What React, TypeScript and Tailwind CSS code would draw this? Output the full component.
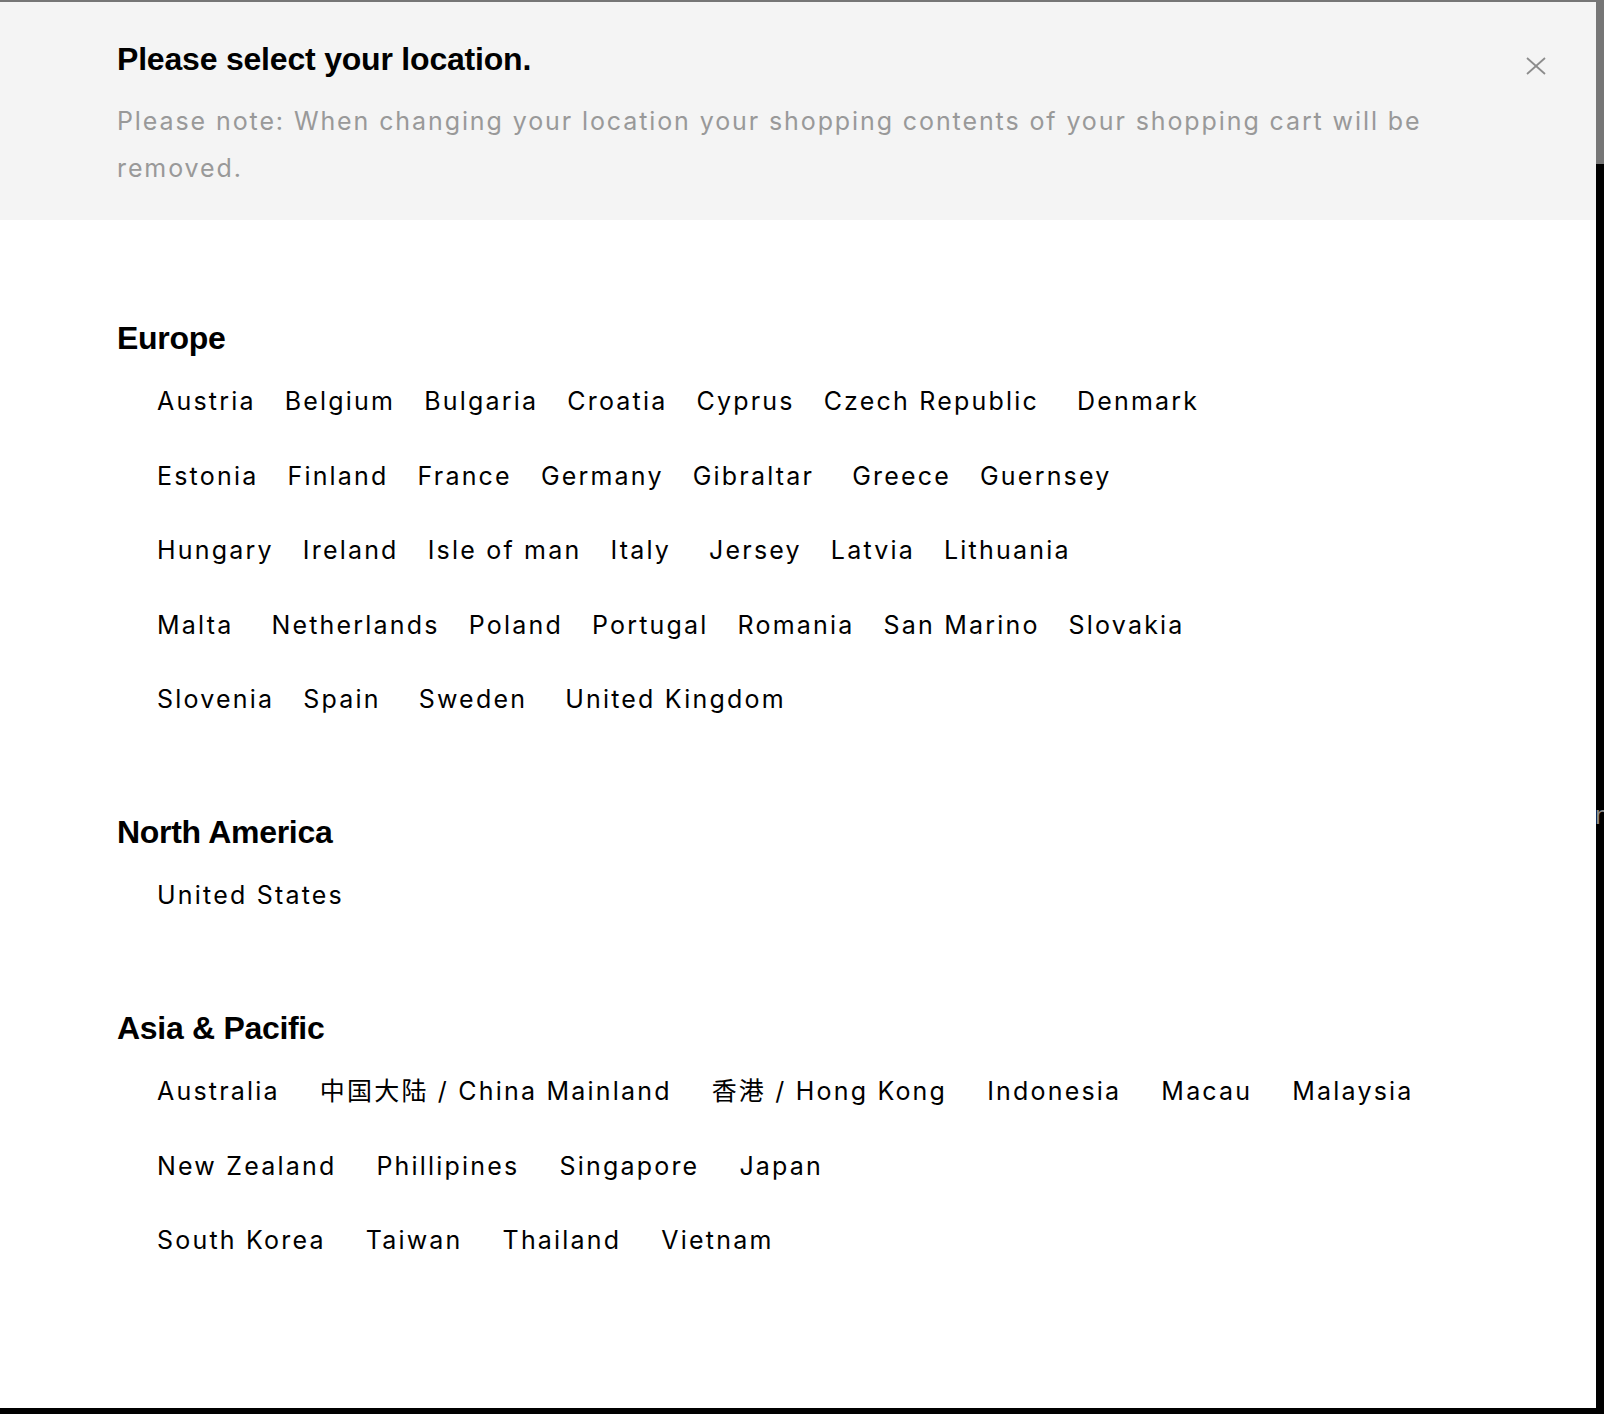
import React from "react";

type Item = { name: string; wide?: boolean; wider?: boolean };

const FONT = {
  fontFamily: '"Liberation Sans", "Noto Sans CJK SC", Arial, sans-serif',
};

const BODY = {
  fontFamily: 'Inter, "Noto Sans CJK SC", "Liberation Sans", sans-serif',
};

const europe: Item[][] = [
  [
    { name: "Austria" },
    { name: "Belgium" },
    { name: "Bulgaria" },
    { name: "Croatia" },
    { name: "Cyprus" },
    { name: "Czech Republic", wide: true },
    { name: "Denmark" },
  ],
  [
    { name: "Estonia" },
    { name: "Finland" },
    { name: "France" },
    { name: "Germany" },
    { name: "Gibraltar", wide: true },
    { name: "Greece" },
    { name: "Guernsey" },
  ],
  [
    { name: "Hungary" },
    { name: "Ireland" },
    { name: "Isle of man" },
    { name: "Italy", wide: true },
    { name: "Jersey" },
    { name: "Latvia" },
    { name: "Lithuania" },
  ],
  [
    { name: "Malta", wide: true },
    { name: "Netherlands" },
    { name: "Poland" },
    { name: "Portugal" },
    { name: "Romania" },
    { name: "San Marino" },
    { name: "Slovakia" },
  ],
  [
    { name: "Slovenia" },
    { name: "Spain", wide: true },
    { name: "Sweden", wide: true },
    { name: "United Kingdom" },
  ],
];

const northAmerica: Item[][] = [[{ name: "United States" }]];

const asia: Item[][] = [
  [
    { name: "Australia", wider: true },
    { name: "中国大陆 / China Mainland", wider: true },
    { name: "香港 / Hong Kong", wider: true },
    { name: "Indonesia", wider: true },
    { name: "Macau", wider: true },
    { name: "Malaysia", wider: true },
  ],
  [
    { name: "New Zealand", wider: true },
    { name: "Phillipines", wider: true },
    { name: "Singapore", wider: true },
    { name: "Japan", wider: true },
  ],
  [
    { name: "South Korea", wider: true },
    { name: "Taiwan", wider: true },
    { name: "Thailand", wider: true },
    { name: "Vietnam", wider: true },
  ],
];

function Region({ title, rows }: { title: string; rows: Item[][] }) {
  return (
    <section className="flex flex-col">
      <h3 className="text-[32px] leading-[40px] font-bold tracking-[-0.3px] text-black">
        {title}
      </h3>
      <div className="mt-[28px] flex flex-col gap-y-[44.5px] pl-[40px]" style={BODY}>
        {rows.map((row, i) => (
          <div key={i} className="flex flex-row gap-x-[29px]">
            {row.map((it) => (
              <button
                key={it.name}
                type="button"
                className={
                  "text-[25px] leading-[30px] tracking-[2.2px] text-black whitespace-nowrap text-left " +
                  (it.wide ? "pr-[9px]" : it.wider ? "pr-[11px]" : "")
                }
              >
                {it.name}
              </button>
            ))}
          </div>
        ))}
      </div>
    </section>
  );
}

export default function App() {
  return (
    <div
      className="w-[1604px] h-[1414px] bg-black flex flex-col overflow-hidden"
      style={FONT}
    >
      <div className="h-[2px] w-full bg-[#767676] shrink-0" />
      <div className="flex flex-row flex-1 min-h-0">
        <div className="w-[1596px] bg-white flex flex-col">
          <header className="bg-[#f4f4f4] flex flex-row justify-between pl-[117px] pt-[37px] pb-[28px]">
            <div className="flex flex-col">
              <h2 className="text-[32px] leading-[40px] font-bold tracking-[-0.2px] text-black">
                Please select your location.
              </h2>
              <p
                className="mt-[19px] w-[1360px] text-[25px] leading-[47px] tracking-[1.9px] text-[#999999]"
                style={BODY}
              >
                Please note: When changing your location your shopping contents
                of your shopping cart will be removed.
              </p>
            </div>
            <button
              type="button"
              aria-label="Close"
              className="mt-[18px] mr-[50px] w-[20px] h-[18px] flex items-center justify-center"
            >
              <svg width="20" height="18" viewBox="0 0 20 18" fill="none">
                <line x1="1" y1="1" x2="19" y2="17" stroke="#8c8c8c" strokeWidth="1.7" />
                <line x1="19" y1="1" x2="1" y2="17" stroke="#8c8c8c" strokeWidth="1.7" />
              </svg>
            </button>
          </header>
          <main className="flex flex-col gap-y-[98px] pt-[98px] pl-[117px]">
            <Region title="Europe" rows={europe} />
            <Region title="North America" rows={northAmerica} />
            <Region title="Asia & Pacific" rows={asia} />
          </main>
        </div>
        <div className="w-[8px] flex flex-col">
          <div className="h-[162px] bg-[#767676] shrink-0" />
          <div className="flex-1 bg-black overflow-hidden">
            <div className="mt-[636px] w-[8px] overflow-hidden">
              <span className="block text-[25px] leading-[30px] text-[#8a8a8a] -ml-[1px]">
                n
              </span>
            </div>
          </div>
        </div>
      </div>
      <div className="h-[6px] w-full bg-black shrink-0" />
    </div>
  );
}
